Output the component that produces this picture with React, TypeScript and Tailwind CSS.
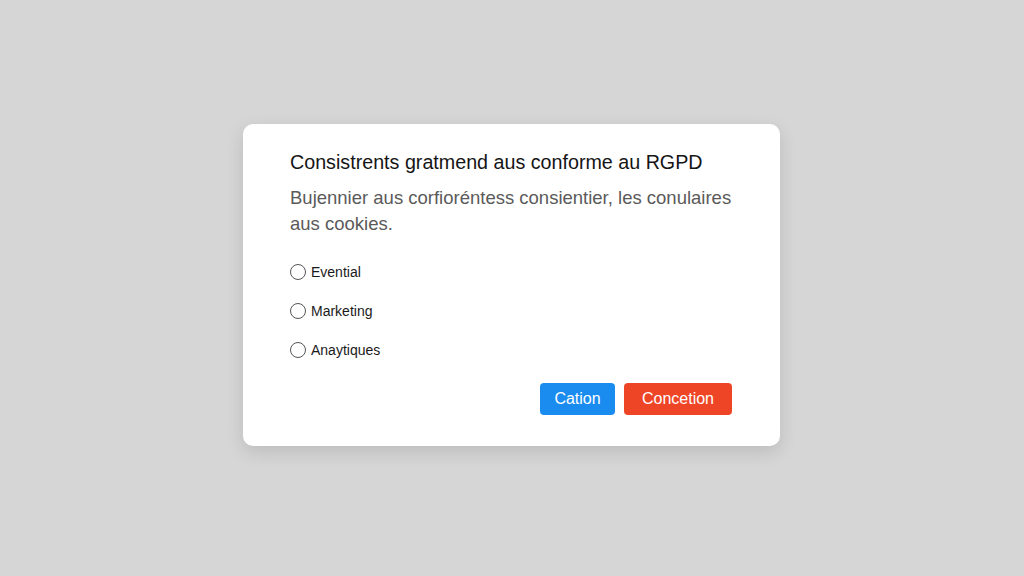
import React, { useState } from 'react';

const options = ['Evential', 'Marketing', 'Anaytiques'];

export default function App() {
    const [selected, setSelected] = useState<string | null>(null);

    return (
        <div
            className="w-full h-[576px] bg-[#d6d6d6] flex items-center justify-center pb-[6px] pr-[1px]"
            style={{ fontFamily: '"Liberation Sans", Arial, sans-serif' }}
        >
            <div className="w-[537px] h-[322px] bg-white rounded-[10px] shadow-[0_6px_18px_rgba(0,0,0,0.12)] pt-[26px] pl-[47px] pr-[48px] pb-[31px] flex flex-col">
                <h2 className="text-[19.7px] leading-[24px] text-[#151515]">Consistrents gratmend aus conforme au RGPD</h2>
                <p className="mt-[11px] text-[18.5px] leading-[26px] text-[#5a5a5a]">
                    Bujennier aus corfioréntess consientier, les conulaires aus cookies.
                </p>

                <div className="mt-[26px] flex flex-col gap-[21px]">
                    {options.map(opt => (
                        <label key={opt} className="flex items-center gap-[5px] cursor-pointer h-[18px]">
                            <span
                                onClick={() => setSelected(opt)}
                                className="w-[16px] h-[16px] rounded-full border border-[#555] flex items-center justify-center"
                            >
                                {selected === opt && <span className="w-[8px] h-[8px] rounded-full bg-[#333]" />}
                            </span>
                            <span className="text-[14px] text-[#1a1a1a]">{opt}</span>
                        </label>
                    ))}
                </div>

                <div className="mt-auto flex justify-end gap-[9px]">
                    <button className="w-[75px] h-[32px] rounded-[4px] bg-[#1a8cf0] text-white text-[16px]">Cation</button>
                    <button className="w-[108px] h-[32px] rounded-[4px] bg-[#ee4527] text-white text-[16px]">Concetion</button>
                </div>
            </div>
        </div>
    );
}
